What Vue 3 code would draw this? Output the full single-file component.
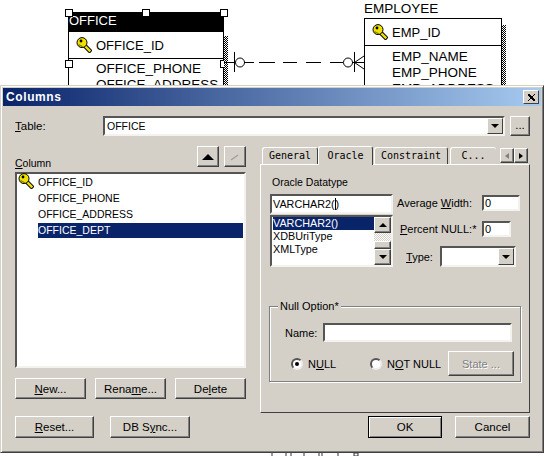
<template>
  <div class="screen">
    <!-- diagram behind the dialog -->
    <div class="entity office">
      <div class="ent_head">OFFICE</div>
      <div class="ent_key">
        <svg class="key key_big" viewBox="0 0 16 16"><use href="#keyshape" /></svg>
        <span>OFFICE_ID</span>
      </div>
      <div class="ent_cols">
        <div>OFFICE_PHONE</div>
        <div>OFFICE_ADDRESS</div>
      </div>
      <i class="handle" style="left:-4px;top:-4px"></i>
      <i class="handle" style="left:73px;top:-4px"></i>
      <i class="handle" style="left:151px;top:-4px"></i>
      <i class="handle" style="left:-4px;top:47px"></i>
      <i class="handle" style="left:151px;top:47px"></i>
    </div>

    <div class="entity_name">EMPLOYEE</div>
    <div class="entity employee">
      <div class="ent_key">
        <svg class="key key_big" viewBox="0 0 16 16"><use href="#keyshape" /></svg>
        <span>EMP_ID</span>
      </div>
      <div class="ent_cols">
        <div>EMP_NAME</div>
        <div>EMP_PHONE</div>
        <div>EMP_ADDRESS</div>
      </div>
    </div>

    <svg class="relation" width="150" height="24" viewBox="0 0 150 24">
      <g fill="none" stroke="#000" stroke-width="1">
        <path d="M0 12.5H11.5M10.5 2V22" />
        <circle cx="16" cy="12.5" r="4.5" />
        <path d="M20 12.5H30M35 12.5H51M59 12.5H73M82 12.5H97M106 12.5H119" />
        <circle cx="124" cy="12.5" r="4.5" />
        <path d="M128 12.5H140M130.5 2V22M130.5 12.5L140 6M130.5 12.5L140 19" />
      </g>
    </svg>

    <svg class="defs" width="0" height="0">
      <defs>
        <g id="keyshape">
          <path d="M8 8L13.5 13.5" stroke="#000" stroke-width="4.4" stroke-linecap="square" />
          <path d="M8 8L13.5 13.5" stroke="#f0e000" stroke-width="2.4" stroke-linecap="square" />
          <circle cx="6" cy="5.6" r="5" fill="#f0e000" stroke="#000" />
          <circle cx="5" cy="4" r="1.4" fill="#000" />
          <path d="M2.5 7.5L7 10" stroke="#808000" stroke-width="1.2" />
        </g>
      </defs>
    </svg>

    <!-- dialog -->
    <div class="dialog">
      <div class="titlebar">
        <span class="title">Columns</span>
        <button class="closebtn">
          <svg width="9" height="9" viewBox="0 0 9 9"><path d="M1 1L8 8M8 1L1 8M2 1L8 7M1 2L7 8" stroke="#000" fill="none" /></svg>
        </button>
      </div>

      <div class="body">
        <div class="table_row">
          <label class="table_label"><u>T</u>able:</label>
          <div class="combo sunken table_combo">
            <span class="combo_text">OFFICE</span>
            <span class="arrow_btn"><i class="tri_down"></i></span>
          </div>
          <button class="btn dots">...</button>
        </div>

        <div class="main">
          <div class="left">
            <div class="col_head">
              <label class="col_label"><u>C</u>olumn</label>
              <button class="btn move"><i class="tri_up"></i></button>
              <button class="btn move">
                <svg width="12" height="8" viewBox="0 0 12 8"><path d="M2 7L9 2" stroke="#a0a0a0" stroke-width="1.4" /></svg>
              </button>
            </div>
            <div class="sunken col_list">
              <div v-for="(c, i) in columns" :key="c" class="col_row">
                <svg v-if="i === 0" class="key key_small" viewBox="0 0 16 16"><use href="#keyshape" /></svg>
                <span class="col_text" :class="{ selected: i === 3 }">{{ c }}</span>
              </div>
            </div>
            <div class="col_btns">
              <button class="btn"><span><u>N</u>ew...</span></button>
              <button class="btn"><span>Rena<u>m</u>e...</span></button>
              <button class="btn"><span>De<u>l</u>ete</span></button>
            </div>
          </div>

          <div class="right">
            <div class="tabs">
              <span class="tab" style="width:56px">General</span>
              <span class="tab active" style="width:55px">Oracle</span>
              <span class="tab" style="width:74px">Constraint</span>
              <span class="tab last" style="width:46px">C...</span>
              <span class="tab_arrows">
                <button class="btn tab_arrow"><i class="tri_left"></i></button>
                <button class="btn tab_arrow"><i class="tri_right"></i></button>
              </span>
            </div>
            <div class="panel">
              <div class="type_area">
                <div class="type_left">
                  <div class="dt_label">Oracle Datatype</div>
                  <div class="sunken dt_input">VARCHAR2(<span class="caret"></span>)</div>
                  <div class="sunken dt_list">
                    <div class="dt_items">
                      <div class="dt_item selected">VARCHAR2()</div>
                      <div class="dt_item">XDBUriType</div>
                      <div class="dt_item">XMLType</div>
                    </div>
                    <div class="scroll">
                      <span class="btn scroll_btn"><i class="tri_up small"></i></span>
                      <span class="scroll_track"></span>
                      <span class="btn scroll_thumb"></span>
                      <span class="btn scroll_btn"><i class="tri_down small"></i></span>
                    </div>
                  </div>
                </div>
                <div class="type_right">
                  <div class="field avg">
                    <span class="field_label">Average <u>W</u>idth:</span>
                    <span class="sunken num num_wide">0</span>
                  </div>
                  <div class="field pct">
                    <span class="field_label"><u>P</u>ercent NULL:*</span>
                    <span class="sunken num">0</span>
                  </div>
                  <div class="field typ">
                    <span class="field_label"><u>T</u>ype:</span>
                    <span class="combo sunken type_combo">
                      <span class="combo_text"></span>
                      <span class="arrow_btn"><i class="tri_down"></i></span>
                    </span>
                  </div>
                </div>
              </div>

              <div class="group">
                <span class="legend">Null Option*</span>
                <div class="name_row">
                  <span class="name_label">Name:</span>
                  <span class="sunken name_input"></span>
                </div>
                <div class="radio_row">
                  <span class="radio on"></span>
                  <span class="radio_text">N<u>U</u>LL</span>
                  <span class="radio"></span>
                  <span class="radio_text">N<u>O</u>T NULL</span>
                  <button class="btn state">State ...</button>
                </div>
              </div>
            </div>
          </div>
        </div>

        <div class="footer">
          <button class="btn reset"><span><u>R</u>eset...</span></button>
          <button class="btn sync"><span>DB S<u>y</u>nc...</span></button>
          <span class="grow"></span>
          <button class="btn ok">OK</button>
          <button class="btn cancel">Cancel</button>
        </div>
      </div>
    </div>

    <!-- bits of the diagram showing under the dialog -->
    <svg class="scraps" width="100" height="3" viewBox="0 0 100 3">
      <path d="M2 0V3M16 0V3M21 0V3M34 0V3M49 0V3M52 0V3M68 0V3M84 0H88V3H84Z" stroke="#333" fill="none" />
    </svg>
  </div>
</template>

<script setup>
const columns = ['OFFICE_ID', 'OFFICE_PHONE', 'OFFICE_ADDRESS', 'OFFICE_DEPT'];
</script>

<style>
html, body { margin: 0; background: #fff; }
</style>

<style scoped>
.screen {
  position: relative;
  width: 544px;
  height: 456px;
  overflow: hidden;
  background: #fff;
  font-family: "Liberation Sans", Arial, sans-serif;
  font-size: 11.5px;
  color: #000;
}
button { font: inherit; color: inherit; padding: 0; }
i { display: block; }

/* diagram */
.entity {
  position: absolute;
  box-sizing: border-box;
  border: 1px solid #000;
  background: #fff;
  font-size: 13.5px;
}
.entity::after {
  content: "";
  position: absolute;
  right: -5px;
  width: 4px;
  height: 100%;
  background: repeating-conic-gradient(#000 0 25%, #fff 0 50%) 0 0 / 2px 2px;
}
.office { left: 68px; top: 12px; width: 156px; height: 90px; }
.office::after { top: 23px; }
.employee { left: 364px; top: 18px; width: 138px; height: 80px; }
.employee::after { top: 6px; }
.ent_head {
  height: 19px;
  background: #000;
  color: #fff;
  line-height: 15px;
  font-size: 13px;
}
.ent_key {
  display: flex;
  align-items: center;
  height: 26px;
  border-bottom: 1px solid #000;
  font-size: 13px;
}
.key_big { width: 16px; height: 16px; margin: 0 4px 0 7px; }
.ent_cols { padding: 2px 0 0 27px; line-height: 16px; }
.employee .ent_cols { padding-top: 3px; }
.handle {
  position: absolute;
  width: 6px;
  height: 6px;
  background: #fff;
  border: 1px solid #000;
}
.entity_name { position: absolute; left: 364px; top: 0; font-size: 13.5px; line-height: 17px; }
.relation { position: absolute; left: 224px; top: 50px; }
.defs { position: absolute; }
.scraps { position: absolute; left: 270px; top: 453px; }

/* dialog */
.dialog {
  position: absolute;
  left: 0;
  top: 85px;
  box-sizing: border-box;
  width: 544px;
  height: 368px;
  background: #d4d0c8;
  border: 1px solid;
  border-color: #d4d0c8 #404040 #404040 #d4d0c8;
  box-shadow: inset 1px 1px 0 #fff, inset -1px -1px 0 #808080;
  padding: 2px;
}
.titlebar {
  display: flex;
  align-items: center;
  justify-content: space-between;
  height: 18px;
  padding: 0 2px 0 3px;
  background: linear-gradient(90deg, #0a246a, #a6caf0);
}
.title { color: #fff; font-weight: bold; font-size: 12px; letter-spacing: .6px; }
.closebtn {
  display: flex;
  align-items: center;
  justify-content: center;
  width: 16px;
  height: 14px;
  background: #d4d0c8;
  border: 1px solid;
  border-color: #fff #404040 #404040 #fff;
}
.body { padding: 10px 0 0 12px; }

.sunken {
  box-sizing: border-box;
  background: #fff;
  border: 2px solid;
  border-color: #555 #f4f2ee #f4f2ee #555;
}
.btn {
  box-sizing: border-box;
  display: flex;
  align-items: center;
  justify-content: center;
  background: #d4d0c8;
  border: 1px solid;
  border-color: #fff #404040 #404040 #fff;
  box-shadow: inset -1px -1px 0 #808080;
}

.table_row { display: flex; align-items: center; height: 20px; }
.table_label { width: 88px; }
.combo { display: flex; align-items: center; }
.table_combo { width: 402px; height: 20px; font-size: 10.5px; }
.combo_text { flex: 1; padding-left: 2px; }
.arrow_btn {
  box-sizing: border-box;
  display: flex;
  align-items: center;
  justify-content: center;
  width: 16px;
  height: 100%;
  background: #d4d0c8;
  border: 1px solid;
  border-color: #fff #404040 #404040 #fff;
}
.dots { width: 20px; height: 20px; margin-left: 5px; padding-bottom: 2px; }

.tri_down, .tri_up, .tri_left, .tri_right { width: 0; height: 0; border-style: solid; border-color: transparent; }
.tri_down { border-width: 4px 4px 0; border-top-color: #000; }
.tri_up { border-width: 0 6px 6px; border-bottom-color: #000; }
.tri_up.small { border-width: 0 4px 4px; }
.tri_left { border-width: 3px 4px 3px 0; border-right-color: #808080; }
.tri_right { border-width: 3px 0 3px 4px; border-left-color: #000; }

.main { display: flex; margin-top: 9px; height: 268px; }
.left { width: 231px; }
.col_head { display: flex; align-items: flex-end; gap: 5px; height: 27px; }
.col_label { flex: 1; line-height: 12px; margin-bottom: 3px; font-size: 10.5px; }
.move { width: 22px; height: 21px; margin-bottom: 5px; }
.col_list { height: 196px; padding: 0 1px 0 1px; font-size: 10.5px; }
.col_row { display: flex; align-items: center; height: 16px; padding-left: 20px; position: relative; }
.key_small { position: absolute; left: 0; top: -1px; width: 16px; height: 16px; }
.col_text { flex: 1; line-height: 15px; }
.col_text.selected { background: #0a246a; color: #fff; }
.col_btns { display: flex; gap: 9px; margin-top: 10px; }
.col_btns .btn { flex: 1; height: 21px; }

.right { width: 270px; margin-left: 14px; }
.tabs { display: flex; align-items: flex-end; height: 19px; padding-left: 2px; font-family: "DejaVu Sans Mono", monospace; font-size: 10px; }
.tab {
  box-sizing: border-box;
  height: 17px;
  line-height: 15px;
  text-align: center;
  border: 1px solid;
  border-color: #fff #404040 transparent #fff;
  border-bottom: 0;
  border-radius: 3px 3px 0 0;
}
.tab.active { height: 19px; line-height: 18px; margin: 0 1px -1px 0; position: relative; background: #d4d0c8; z-index: 1; }
.tab.last { border-right: 0; margin-left: 2px; }
.tab_arrows { display: flex; margin: 0 0 1px 4px; }
.tab_arrow { width: 14px; height: 15px; }
.panel {
  box-sizing: border-box;
  height: 249px;
  padding: 11px 9px 0 9px;
  border: 1px solid;
  border-color: #fff #404040 #404040 #fff;
}
.type_area { display: flex; height: 120px; }
.type_left { width: 125px; }
.dt_label { height: 18px; line-height: 13px; padding-left: 2px; font-size: 10.5px; }
.dt_input { height: 20px; padding: 0 1px; line-height: 16px; font-size: 10.8px; }
.caret { display: inline-block; width: 1px; height: 12px; background: #000; vertical-align: -2px; }
.dt_list { display: flex; height: 52px; margin-top: 1px; font-size: 10.8px; }
.dt_items { flex: 1; padding: 0 0 0 1px; line-height: 13px; }
.dt_item.selected { background: #0a246a; color: #fff; }
.scroll { display: flex; flex-direction: column; width: 17px; }
.scroll_btn { height: 16px; flex: none; }
.scroll_track { height: 8px; background: repeating-conic-gradient(#d4d0c8 0 25%, #fff 0 50%) 0 0 / 2px 2px; }
.scroll_thumb { flex: 1; }
.type_right { flex: 1; font-size: 11px; white-space: nowrap; }
.field { display: flex; align-items: center; }
.avg { margin: 19px 0 0 4px; }
.avg .field_label { width: 85px; }
.pct { margin: 10px 0 0 7px; }
.pct .field_label { width: 82px; }
.typ { margin: 9px 0 0 13px; }
.typ .field_label { width: 34px; }
.num { width: 29px; height: 16px; line-height: 12px; padding-left: 1px; }
.num_wide { width: 38px; }
.type_combo { width: 76px; height: 21px; justify-content: flex-end; }
.type_combo .arrow_btn { flex: none; }

.group {
  position: relative;
  box-sizing: border-box;
  height: 76px;
  margin: 10px -1px 0 -1px;
  border: 1px solid #808080;
  box-shadow: 1px 1px 0 #fff, inset 1px 1px 0 #fff;
  font-size: 11px;
}
.legend { position: absolute; left: 8px; top: -7px; padding: 0 2px; background: #d4d0c8; line-height: 13px; }
.name_row { display: flex; align-items: center; padding: 16px 0 0 15px; }
.name_label { width: 38px; }
.name_input { width: 189px; height: 19px; }
.radio_row { display: flex; align-items: center; margin-top: 9px; padding-left: 21px; }
.radio {
  box-sizing: border-box;
  width: 12px;
  height: 12px;
  border-radius: 50%;
  border: 2px solid;
  border-color: #555 #eee #eee #555;
  background: #fff;
  position: relative;
}
.radio.on::after {
  content: "";
  position: absolute;
  left: 2px;
  top: 2px;
  width: 4px;
  height: 4px;
  border-radius: 50%;
  background: #000;
}
.radio_text { margin-left: 5px; }
.radio_text:nth-of-type(2) { width: 62px; }
.radio_text:nth-of-type(4) { width: 61px; }
.state { width: 66px; height: 25px; color: #808080; text-shadow: 1px 1px 0 #fff; }

.footer { display: flex; margin-top: 3px; padding-right: 11px; }
.footer .btn { height: 22px; }
.reset { width: 79px; }
.sync { width: 80px; margin-left: 16px; }
.grow { flex: 1; }
.ok { width: 74px; border-color: #000 !important; box-shadow: inset 1px 1px 0 #fff, inset -1px -1px 0 #808080; }
.cancel { width: 75px; margin-left: 13px; }
</style>
